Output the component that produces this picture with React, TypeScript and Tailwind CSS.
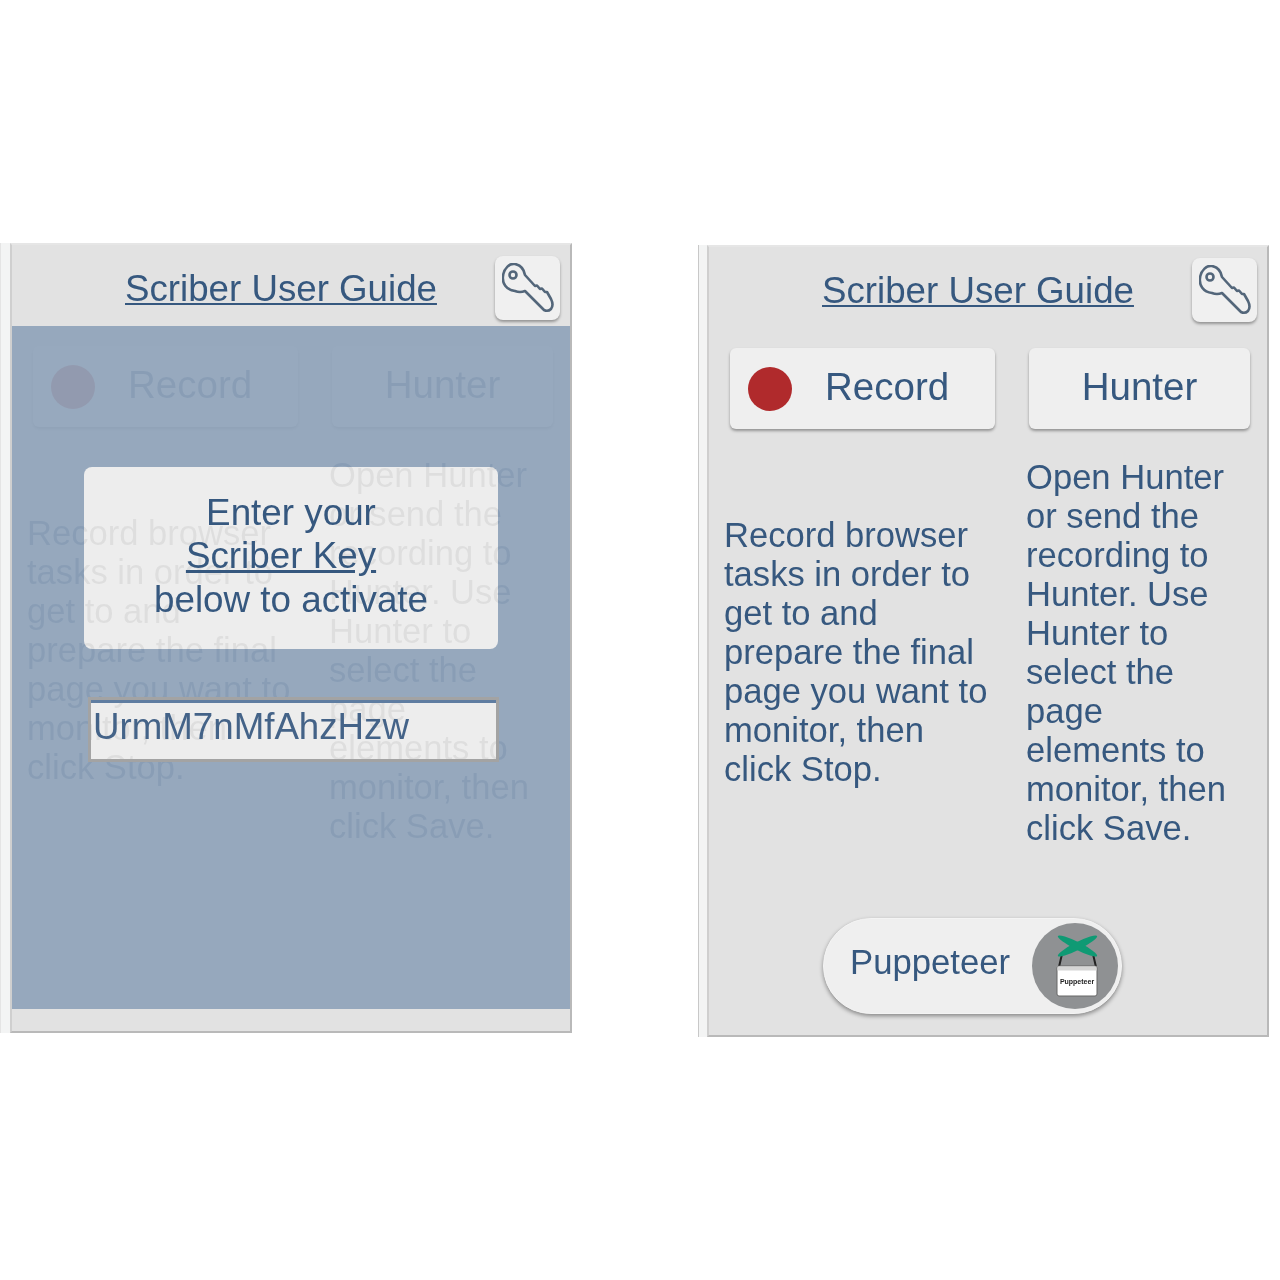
import { ReactNode } from 'react';

function KeyIcon() {
  return (
    <svg viewBox="0 0 52 50" className="w-[52px] h-[50px]" fill="none" stroke="#53667a" strokeWidth="2.6" strokeLinejoin="round">
      <path d="M23 12 L33 23 L35 22.5 L38 26 L40 25.5 L43 29 L45 29 L49 36 Q52 42 49 46 Q46 49 42 47 L23 28 Q18 30 13 28 C4 27 0 20 1 13 C2 5 8 0 13 1 C18 2 22 6 23 12 Z" />
      <circle cx="11" cy="12" r="3.5" />
    </svg>
  );
}

function PuppeteerLogo() {
  return (
    <svg viewBox="0 0 86 86" className="w-[86px] h-[86px]">
      <circle cx="43" cy="43" r="43" fill="#8f9193" />
      <path d="M30 31 L27 44 M61 31 L64 44" stroke="#222" strokeWidth="2" />
      <ellipse cx="45.5" cy="23" rx="22" ry="3.8" fill="#0f9a74" transform="rotate(27 45.5 23)" />
      <ellipse cx="45.5" cy="23" rx="22" ry="3.8" fill="#0f9a74" transform="rotate(-27 45.5 23)" />
      <rect x="25" y="43" width="40" height="30" rx="2" fill="#fff" stroke="#666" strokeWidth="1" />
      <rect x="25.5" y="43.5" width="39" height="4" fill="#d5d5d5" />
      <text x="45" y="61" textAnchor="middle" fontSize="7" fontWeight="700" fill="#222" fontFamily="Liberation Sans, sans-serif">
        Puppeteer
      </text>
    </svg>
  );
}

function Panel({ className, overlay, puppeteer }: { className: string; overlay?: ReactNode; puppeteer?: boolean }) {
  return (
    <div className={`relative flex flex-col bg-[#e2e2e2] border-r-2 border-b-2 border-l-2 border-t-2 border-t-[#e6e6e6] border-l-[#cfcfcf] border-[#b9b9b9] text-[#36587f] ${className}`}>
      <div className="h-[81px] shrink-0 flex items-start">
        <a className="ml-[113px] mt-[22px] text-[36.7px] leading-[44px] underline decoration-2 underline-offset-2 whitespace-nowrap">Scriber User Guide</a>
        <button className="ml-auto mr-[10px] mt-[11px] w-[65px] h-[64px] rounded-lg bg-[#f0f0f0] shadow-[0_2px_3px_rgba(0,0,0,0.35)] flex items-center justify-center">
          <KeyIcon />
        </button>
      </div>
      <div className="flex mt-[20px] ml-[21px] gap-[34px]">
        <button className="w-[265px] h-[81px] rounded-md bg-[#efefef] shadow-[0_2px_3px_rgba(0,0,0,0.35)] flex items-center pl-[18px] gap-[33px] text-[38.5px]">
          <span className="w-[44px] h-[44px] rounded-full bg-[#b02a2c]" />
          <span className="pb-[4px]">Record</span>
        </button>
        <button className="w-[221px] h-[81px] pb-[4px] rounded-md bg-[#efefef] shadow-[0_2px_3px_rgba(0,0,0,0.35)] text-[38.5px]">Hunter</button>
      </div>
      <div className="flex items-center mt-[29px] text-[34.6px] leading-[39px]">
        <p className="ml-[15px] w-[285px] pr-[14px] pb-[2px]">Record browser tasks in order to get to and prepare the final page you want to monitor, then click Stop.</p>
        <p className="w-[210px] ml-[17px]">Open Hunter or send the recording to Hunter. Use Hunter to select the page elements to monitor, then click Save.</p>
      </div>
      {puppeteer && (
        <div className="mt-[70px] ml-[114px] w-[299px] h-[96px] rounded-full bg-[#efefef] border border-[#f4f4f4] shadow-[0_2px_4px_rgba(0,0,0,0.4)] flex items-center justify-between pl-[26px] pr-[3px] text-[34.7px]">
          <span className="pb-[7px]">Puppeteer</span>
          <PuppeteerLogo />
        </div>
      )}
      {overlay}
    </div>
  );
}

function KeyOverlay() {
  return (
    <div className="absolute left-0 right-0 top-[81px] bottom-[22px] bg-[#90a3ba]/[0.925]">
      {/* the page behind stays faintly readable through the dialog */}
      <div className="absolute left-[72px] top-[141px] w-[414px] h-[182px] pb-[4px] rounded-lg backdrop-grayscale backdrop-brightness-[1.44] flex flex-col items-center justify-center text-[36.8px] leading-[43.5px] text-[#36587f]">
        <span>Enter your</span>
        <a className="underline underline-offset-2 -ml-[20px]">Scriber Key</a>
        <span>below to activate</span>
      </div>
      <input
        readOnly
        value="UrmM7nMfAhzHzw"
        className="absolute left-[76px] top-[371px] w-[411px] h-[65px] border-[3px] border-[#a3a3a3] shadow-[inset_0_3px_0_#5f7da1] backdrop-grayscale backdrop-brightness-[1.44] pl-[2px] pb-[5px] text-[36.7px] text-[#446388] font-['Liberation_Sans',sans-serif] outline-none"
      />
    </div>
  );
}

export default function App() {
  return (
    <div className="w-[1280px] h-[1280px] bg-white font-['Liberation_Sans',sans-serif] blur-[0.5px] overflow-hidden flex items-start">
      <div className="mt-[243px] flex bg-[#f3f4f4] pl-[9px] border-l border-[#e4e4e4]">
        <Panel className="w-[562px] h-[790px]" overlay={<KeyOverlay />} />
      </div>
      <div className="mt-[245px] ml-[126px] flex bg-[#f3f4f4] pl-[8px] border-l border-[#c8c8c8]">
        <Panel className="w-[562px] h-[792px]" puppeteer />
      </div>
    </div>
  );
}
